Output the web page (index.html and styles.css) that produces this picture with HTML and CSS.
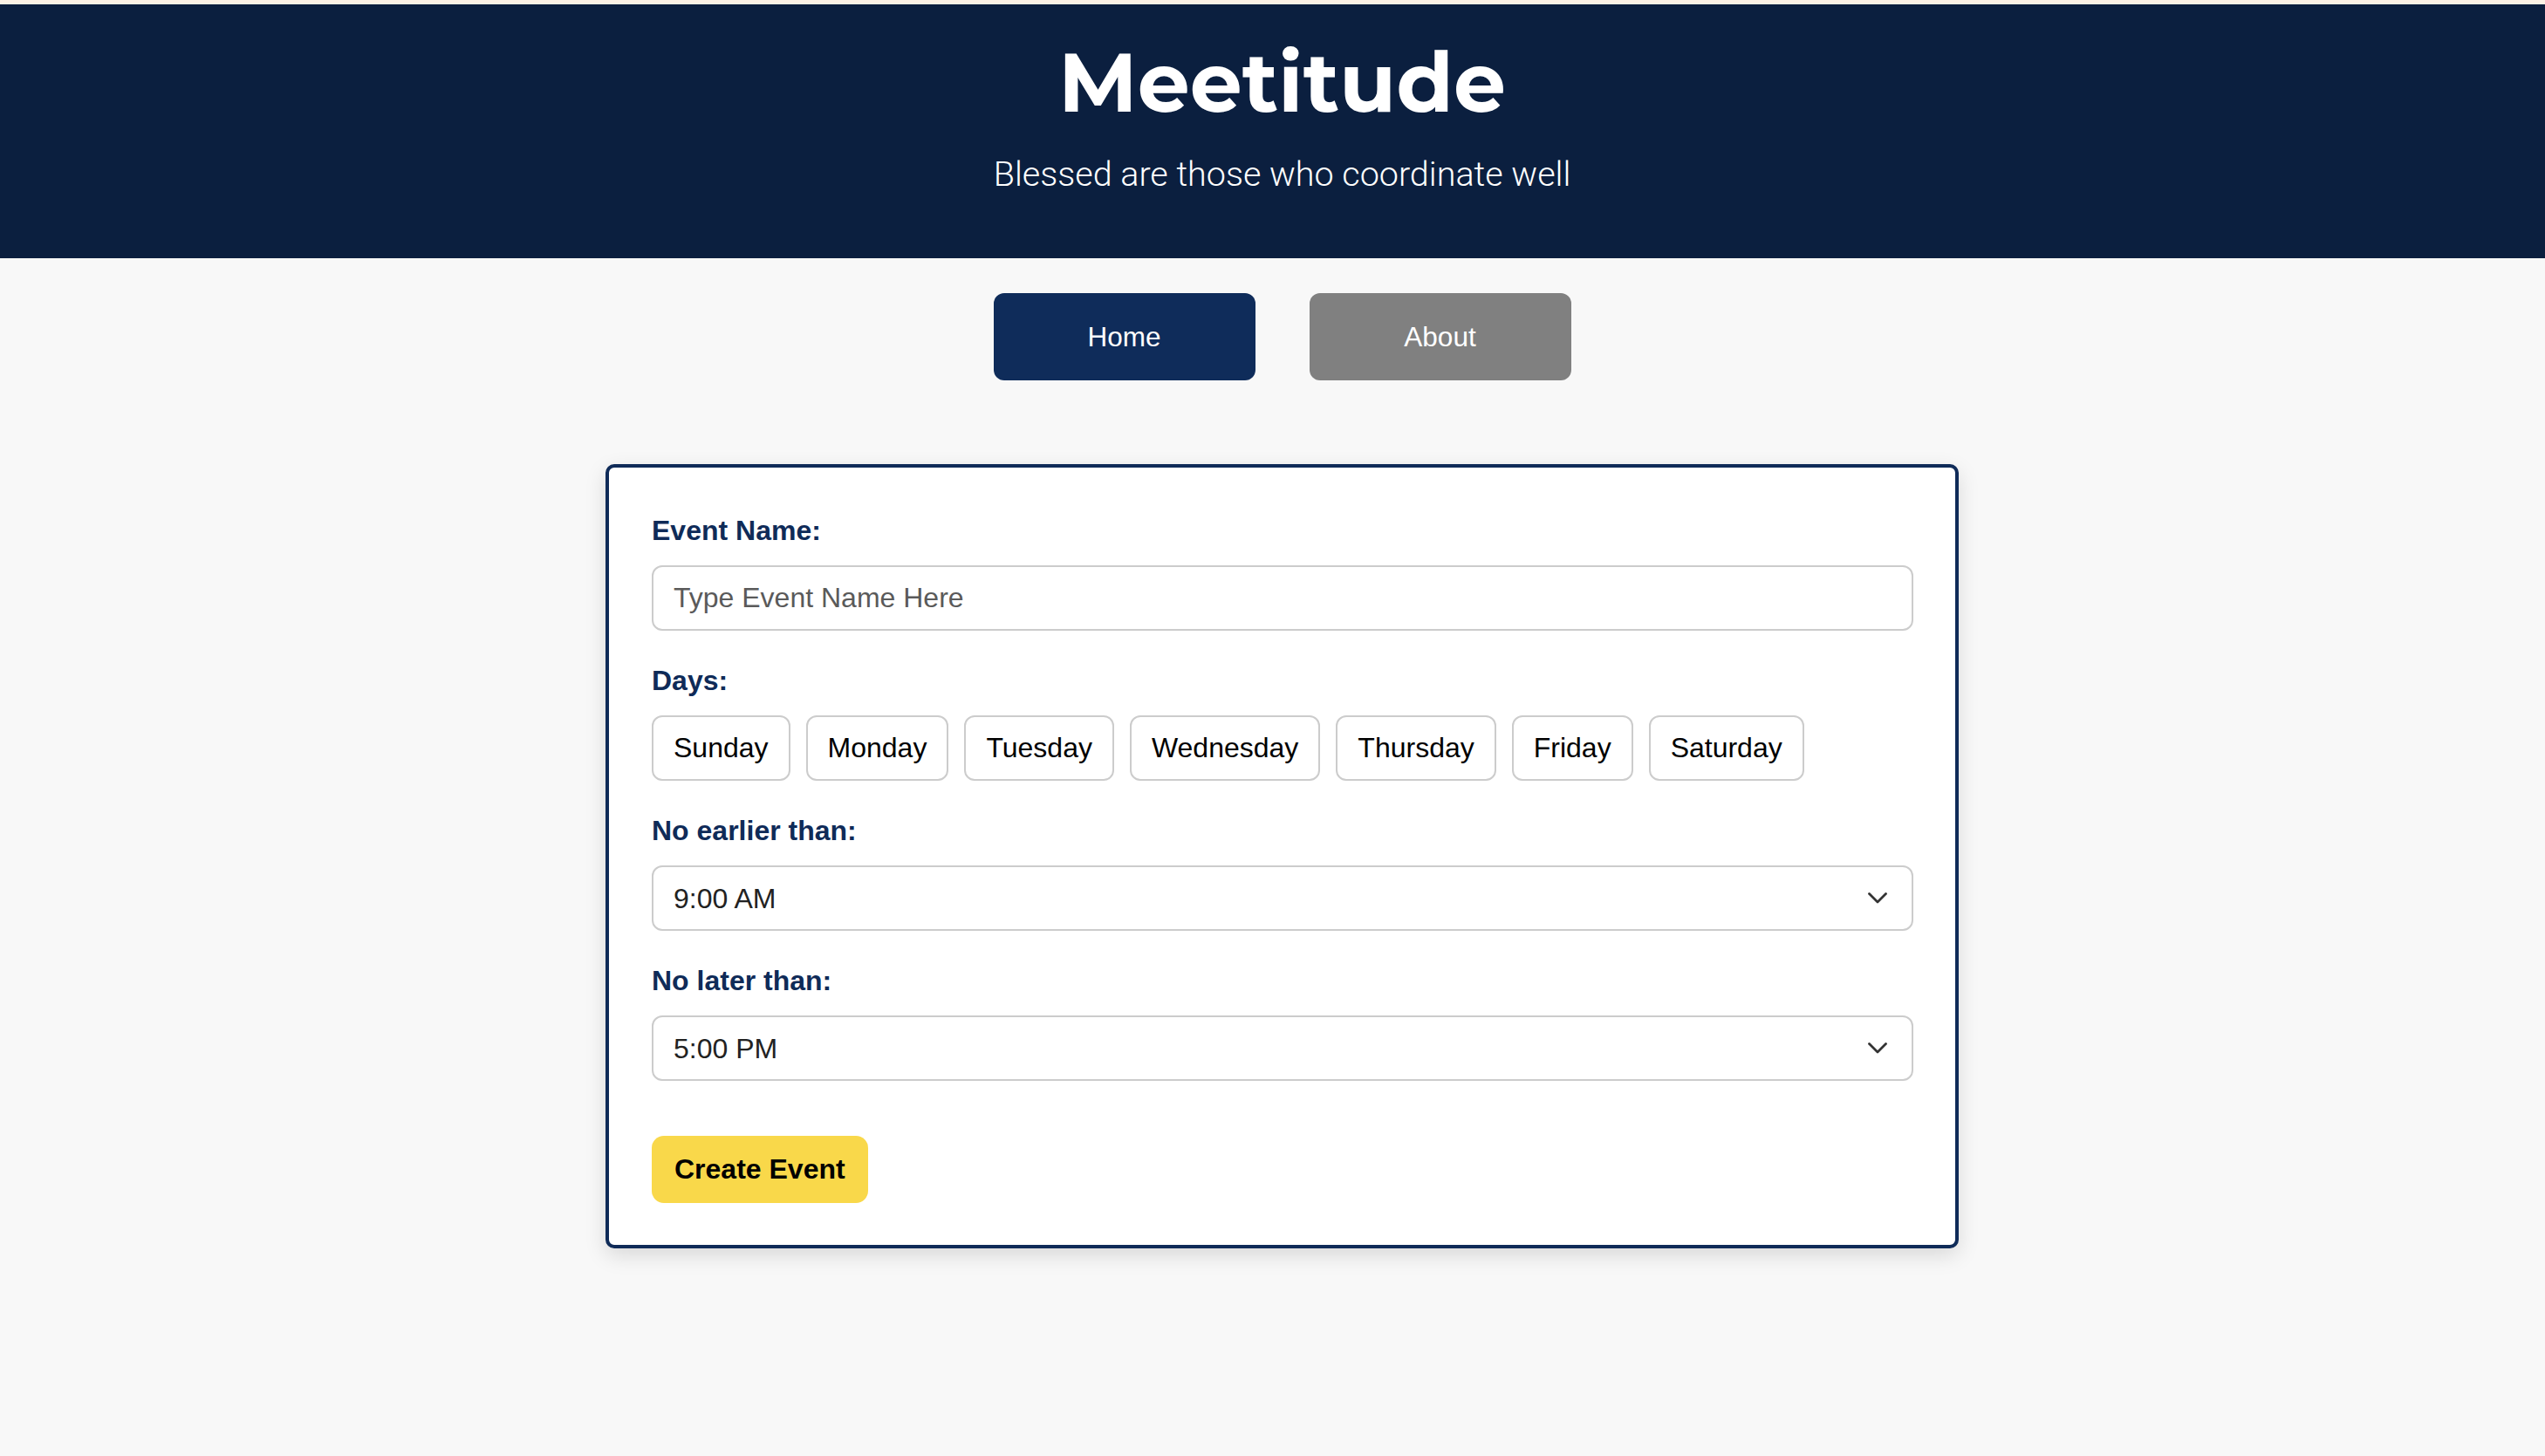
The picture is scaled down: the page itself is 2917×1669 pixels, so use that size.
FILE: index.html
```html
<!DOCTYPE html>
<html lang="en">
<head>
<meta charset="utf-8">
<title>Meetitude</title>
<link rel="stylesheet" href="styles.css">
</head>
<body>
<div class="topline"></div>
<header class="site-header">
  <h1 class="title">Meetitude</h1>
  <p class="tagline">Blessed are those who coordinate well</p>
</header>
<main class="main">
  <nav class="nav">
    <a class="nav-btn nav-btn--active" href="#">Home</a>
    <a class="nav-btn nav-btn--muted" href="#">About</a>
  </nav>
  <form class="card">
    <label class="field-label" for="event-name">Event Name:</label>
    <input class="text-input" id="event-name" type="text" placeholder="Type Event Name Here">

    <div class="field-label field-label--gap">Days:</div>
    <div class="days">
      <button type="button" class="day">Sunday</button>
      <button type="button" class="day">Monday</button>
      <button type="button" class="day">Tuesday</button>
      <button type="button" class="day">Wednesday</button>
      <button type="button" class="day">Thursday</button>
      <button type="button" class="day">Friday</button>
      <button type="button" class="day">Saturday</button>
    </div>

    <label class="field-label field-label--gap" for="earliest">No earlier than:</label>
    <div class="select-wrap">
      <select class="select" id="earliest">
        <option>9:00 AM</option>
      </select>
      <svg class="chevron" viewBox="0 0 22 13" width="22" height="13" aria-hidden="true"><polyline points="1.5,1.5 11,11 20.5,1.5" fill="none" stroke="#333" stroke-width="2.8" stroke-linecap="round" stroke-linejoin="round"/></svg>
    </div>

    <label class="field-label field-label--gap" for="latest">No later than:</label>
    <div class="select-wrap">
      <select class="select" id="latest">
        <option>5:00 PM</option>
      </select>
      <svg class="chevron" viewBox="0 0 22 13" width="22" height="13" aria-hidden="true"><polyline points="1.5,1.5 11,11 20.5,1.5" fill="none" stroke="#333" stroke-width="2.8" stroke-linecap="round" stroke-linejoin="round"/></svg>
    </div>

    <button type="button" class="create-btn">Create Event</button>
  </form>
</main>
</body>
</html>
```
FILE: styles.css
```css
* { box-sizing: border-box; }

html, body {
  margin: 0;
  padding: 0;
}

body {
  background: #f8f8f8;
  font-family: "Liberation Sans", Arial, Helvetica, sans-serif;
  min-height: 1669px;
}

.topline {
  height: 5px;
  background: #fcf2e6;
}

.site-header {
  background: #0b1f3f;
  height: 291px;
  padding: 42px 0 0 22px;
  display: flex;
  flex-direction: column;
  align-items: center;
  color: #fff;
}

.title {
  margin: 0;
  font-family: "Montserrat", "Inter", "DejaVu Sans", sans-serif;
  font-weight: 700;
  font-size: 95px;
  line-height: 95px;
}

.tagline {
  margin: 35px 0 0;
  font-family: "Roboto", "Liberation Sans", sans-serif;
  font-weight: 300;
  font-size: 39.5px;
  line-height: 46px;
}

.main {
  padding-left: 22px;
  display: flex;
  flex-direction: column;
  align-items: center;
}

.nav {
  margin-top: 40px;
  display: flex;
  gap: 62px;
}

.nav-btn {
  width: 300px;
  height: 100px;
  border-radius: 12px;
  display: flex;
  align-items: center;
  justify-content: center;
  color: #fff;
  text-decoration: none;
  font-size: 31.5px;
}

.nav-btn--active { background: #0f2c5a; }
.nav-btn--muted { background: #808080; }

.card {
  margin-top: 96px;
  width: 1551px;
  background: #fff;
  border: 4px solid #0f2b58;
  border-radius: 10px;
  padding: 54px 48px 48px 49px;
  box-shadow: 0 8px 24px rgba(0, 0, 0, 0.13);
  display: flex;
  flex-direction: column;
  align-items: flex-start;
}

.field-label {
  display: block;
  font-size: 32px;
  line-height: 36px;
  font-weight: 700;
  color: #0f2b58;
  margin-bottom: 22px;
}

.field-label--gap { margin-top: 39px; }

.text-input,
.select {
  width: 100%;
  height: 75px;
  border: 2px solid #cccccc;
  border-radius: 12px;
  padding: 0 23px;
  font-family: "Liberation Sans", Arial, sans-serif;
  font-size: 32px;
  color: #222;
  background: #fff;
  outline: none;
}

.text-input::placeholder { color: #5a5a5a; }

.days {
  display: flex;
  flex-wrap: wrap;
  gap: 18px;
}

.day {
  height: 75px;
  padding: 0 23px;
  border: 2px solid #cccccc;
  border-radius: 12px;
  background: #fff;
  color: #000;
  font-family: "Liberation Sans", Arial, sans-serif;
  font-size: 32px;
  margin: 0;
}

.select-wrap {
  position: relative;
  width: 100%;
}

.select {
  appearance: none;
  -webkit-appearance: none;
  display: block;
  margin: 0;
}

.chevron {
  position: absolute;
  right: 30px;
  top: 31px;
  pointer-events: none;
}

.create-btn {
  margin-top: 63px;
  height: 77px;
  padding: 0 26px;
  border: none;
  border-radius: 14px;
  background: #f9d84a;
  color: #000;
  font-family: "Liberation Sans", Arial, sans-serif;
  font-weight: 700;
  font-size: 32px;
}
```
